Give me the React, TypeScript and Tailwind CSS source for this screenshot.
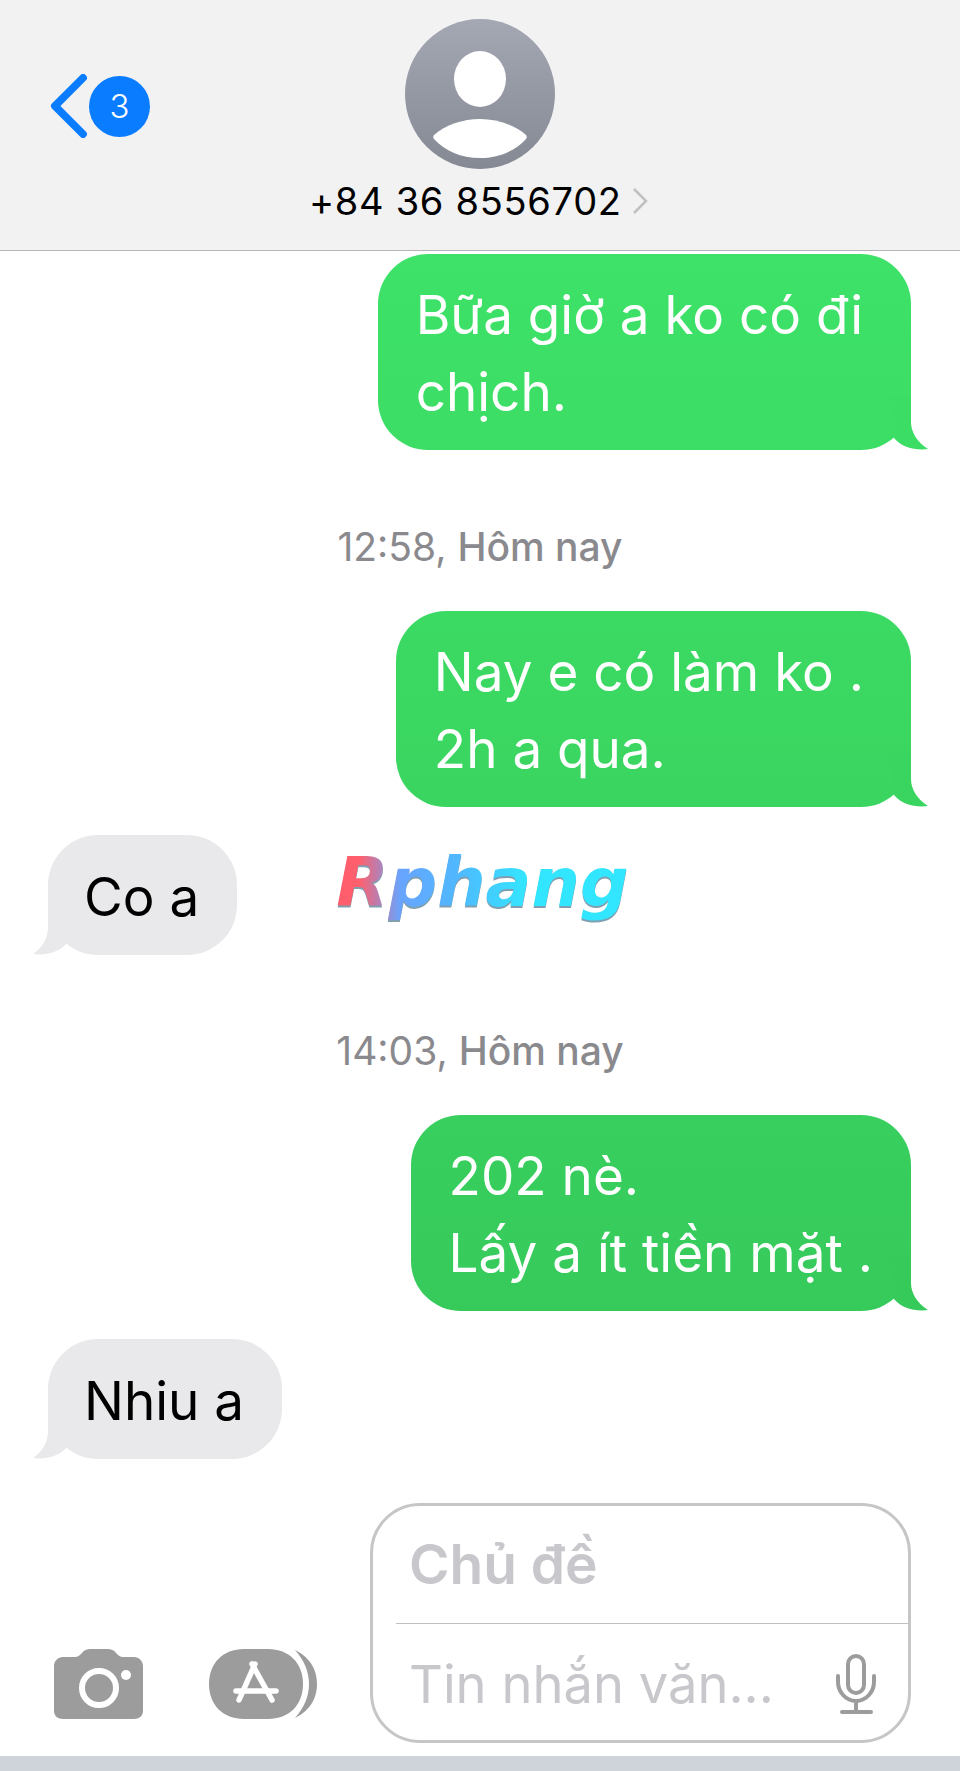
function TailRight({ color }: { color: string }) {
  return (
    <svg viewBox="0 0 48 60" className="absolute right-[-17px] bottom-0 h-[60px] w-[48px]">
      <path d="M31 4 V32 C31 42 37 52 48 59 C36 60.5 22 58 14 48 L8 6 Z" fill={color} />
    </svg>
  );
}

function TailLeft() {
  return (
    <svg viewBox="0 0 48 60" className="absolute left-[-15px] bottom-0 h-[60px] w-[48px]">
      <path d="M15 4 V32 C15 42 10 52 0 59 C12 60.5 26 58 34 48 L40 6 Z" fill="#e9e9eb" />
    </svg>
  );
}

function Sent({ lines, className, tail }: { lines: string[]; className: string; tail: string }) {
  return (
    <div className="flex justify-end pr-[49px]">
      <div className={`relative rounded-[50px] pt-[23px] pb-[19px] pl-[38px] text-[53px] leading-[77px] font-[380] text-white ${className}`}>
        <TailRight color={tail} />
        {lines.map((line) => (
          <p key={line} className="relative whitespace-nowrap">
            {line}
          </p>
        ))}
      </div>
    </div>
  );
}

function Received({ text, className }: { text: string; className: string }) {
  return (
    <div className={`relative rounded-[50px] bg-[#e9e9eb] pt-[23px] pr-[38px] pb-[19px] pl-[36px] text-[53px] leading-[78px] font-[380] text-black ${className}`}>
      <TailLeft />
      <p className="relative whitespace-nowrap">{text}</p>
    </div>
  );
}

function Stamp({ time, className }: { time: string; className: string }) {
  return (
    <p className={`text-center text-[39px] leading-[44px] text-[#8a8a8e] ${className}`}>
      {time}, <span className="font-medium">Hôm nay</span>
    </p>
  );
}

export default function App() {
  return (
    <div className="relative h-[1771px] w-full overflow-hidden bg-white font-['Inter',sans-serif]">
      {/* Header */}
      <div className="relative h-[251px] border-b border-[#b4b4b6] bg-[#f2f2f3]">
        <div className="flex items-start">
          <svg viewBox="0 0 40 66" className="mt-[74px] ml-[49px] h-[64px] w-[39px]">
            <path d="M35 4 L6 33 L35 62" fill="none" stroke="#0a7cff" strokeWidth="8" strokeLinecap="round" strokeLinejoin="round" />
          </svg>
          <div className="mt-[76px] ml-[1px] flex h-[61px] w-[61px] items-center justify-center rounded-full bg-[#0a7cff] text-[33px] font-light text-white">
            3
          </div>
        </div>
        <div className="absolute top-[19px] left-[405px] flex h-[150px] w-[150px] justify-center overflow-hidden rounded-full bg-gradient-to-b from-[#a3a8b3] to-[#858993]">
          <svg viewBox="0 0 150 150" className="h-[150px] w-[150px]">
            <ellipse cx="75" cy="60" rx="26" ry="28" fill="#fff" />
            <path d="M29 116 C40 106 58 100 75 100 C92 100 110 106 121 116 Q122.5 118 121 120 C110 132 94 139 75 139 C56 139 40 132 29 120 Q27.5 118 29 116 Z" fill="#fff" />
          </svg>
        </div>
        <div className="absolute top-[179px] left-[309px] flex items-center">
          <span className="text-[38px] leading-[44px] tracking-[0.7px] text-black">+84 36 8556702</span>
          <svg viewBox="0 0 18 28" className="ml-[9px] h-[28px] w-[18px]">
            <path d="M3 2 L15 14 L3 26" fill="none" stroke="#c0c0c2" strokeWidth="2.5" />
          </svg>
        </div>
      </div>

      {/* Messages */}
      <div className="pt-[3px]">
        <Sent lines={["Bữa giờ a ko có đi", "chịch."]} className="bg-gradient-to-b from-[#3ee268] to-[#3cdd65] pr-[48px]" tail="#3cdd65" />
        <Stamp time="12:58" className="mt-[75px]" />
        <Sent lines={["Nay e có làm ko .", "2h a qua."]} className="mt-[42px] bg-gradient-to-b from-[#3bda63] to-[#3ad560] pr-[47px]" tail="#3ad560" />
        <div className="mt-[28px] flex items-start">
          <Received text="Co a" className="ml-[48px]" />
          <span className="mt-[6px] ml-[99px] bg-[linear-gradient(90deg,#ff5f6d_8%,#68a4ff_22%,#4fb9ff_42%,#33e6ff_65%)] bg-clip-text font-['DejaVu_Sans',sans-serif] text-[68px] leading-[84px] font-bold text-transparent italic drop-shadow-[0_2px_0_#7f9fb0]">
            Rphang
          </span>
        </div>
        <Stamp time="14:03" className="mt-[74px]" />
        <Sent lines={["202 nè.", "Lấy a ít tiền mặt ."]} className="mt-[42px] bg-gradient-to-b from-[#38cf5e] to-[#36ca5b] pr-[38px]" tail="#36ca5b" />
        <Received text="Nhiu a" className="mt-[28px] ml-[48px] w-fit" />
      </div>

      {/* Compose bar */}
      <div className="mt-[44px] flex items-end pb-[28px]">
        <svg viewBox="0 0 89 70" className="mb-[24px] ml-[54px] h-[70px] w-[89px]">
          <path d="M9 8 H21 C24 8 26 6 28 4 C30 1 33 0 36 0 H54 C57 0 60 1 62 4 C64 6 66 8 69 8 H80 C85 8 89 12 89 17 V62 C89 67 85 70 80 70 H9 C4 70 0 67 0 62 V17 C0 12 4 8 9 8 Z" fill="#9c9c9c" />
          <circle cx="45" cy="39" r="17" fill="none" stroke="#fff" strokeWidth="6" />
          <circle cx="72" cy="26" r="5" fill="#fff" />
        </svg>
        <svg viewBox="0 0 108 70" className="mb-[24px] ml-[66px] h-[70px] w-[108px]">
          <path d="M86 1 C104 10 108 24 108 35 C108 46 104 60 86 69 C96 58 100 46 100 35 C100 24 96 12 86 1 Z" fill="#9c9c9c" />
          <path d="M35 0 H59 C80 0 94 14 94 35 C94 56 80 70 59 70 H35 C14 70 0 56 0 35 C0 14 14 0 35 0 Z" fill="#9c9c9c" />
          <path d="M46 15 L30 51 M43 15 L63 51" fill="none" stroke="#fff" strokeWidth="5.5" strokeLinecap="round" />
          <path d="M27 42 H67" fill="none" stroke="#fff" strokeWidth="5.5" strokeLinecap="round" />
        </svg>
        <div className="ml-[53px] h-[240px] w-[541px] rounded-[50px] border-[3px] border-[#c6c6c8]">
          <div className="ml-[23px] h-[118px] border-b border-[#c0c0c2] pt-[26px] pl-[13px] text-[55px] leading-[64px] font-semibold text-[#c7c7cc]">
            Chủ đề
          </div>
          <div className="flex items-center justify-between pt-[28px] pr-[30px] pl-[36px] text-[52.5px] leading-[64px] font-[380] text-[#c7c7cc]">
            <span>Tin nhắn văn...</span>
            <svg viewBox="0 0 44 60" className="h-[60px] w-[44px]">
              <rect x="14" y="2" width="16" height="37" rx="8" fill="none" stroke="#9c9c9c" strokeWidth="4" />
              <path d="M4 22 V28 C4 38 12 47 22 47 C32 47 40 38 40 28 V22 M22 47 V57" fill="none" stroke="#9c9c9c" strokeWidth="4" strokeLinecap="round" />
              <path d="M8 58 H37" stroke="#9c9c9c" strokeWidth="4" strokeLinecap="round" />
            </svg>
          </div>
        </div>
      </div>

      <div className="absolute right-0 bottom-0 left-0 h-[15px] bg-[#cfd3da]" />
    </div>
  );
}
